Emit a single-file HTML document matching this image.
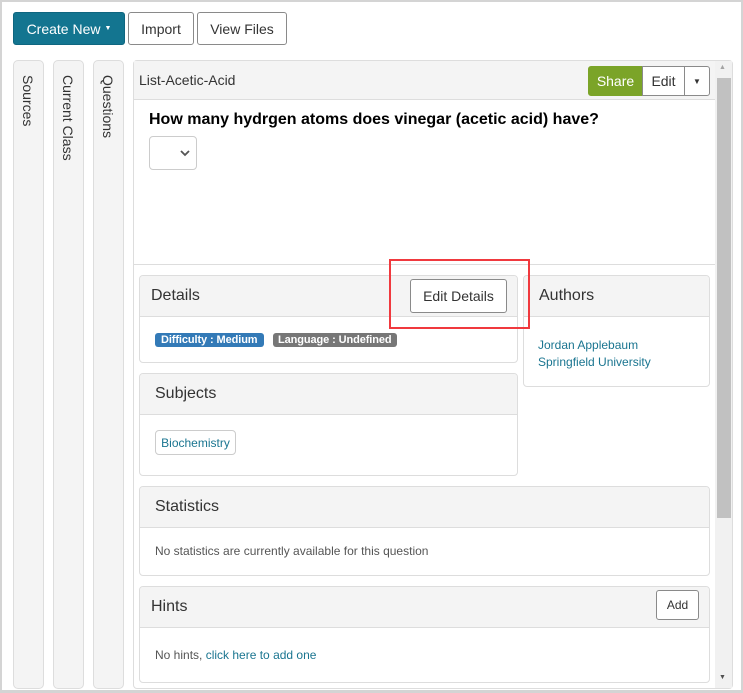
<!DOCTYPE html>
<html><head><style>
*{box-sizing:border-box;margin:0;padding:0}
body{width:743px;height:693px;overflow:hidden;background:#fff;font-family:"Liberation Sans",Arial,sans-serif;color:#333;position:relative}
.frame{position:absolute;left:0;top:0;width:743px;height:693px;border:2px solid #d4d4d4;border-bottom-width:3px}
.a{position:absolute}
.btn{position:absolute;border:1px solid #8a8a8a;border-radius:3px;background:#fff;font-size:14px;display:flex;align-items:center;justify-content:center;color:#333}
.tab{position:absolute;top:60px;width:31px;height:629px;background:#f4f4f4;border:1px solid #ddd;border-radius:5px}
.tab span{position:absolute;left:6px;top:14px;writing-mode:vertical-rl;font-size:14px;color:#333}
.panel{position:absolute;border:1px solid #ddd;border-radius:4px;background:#fff;overflow:hidden}
.ph{background:#f4f4f4;border-bottom:1px solid #ddd;font-size:16px;color:#333;padding-left:11px;display:flex;align-items:center;position:relative}
.badge{position:absolute;top:333px;height:14px;border-radius:3px;color:#fff;font-size:11px;font-weight:bold;line-height:14px;padding:0 6px;letter-spacing:-0.1px}
a{color:#1a7590;text-decoration:none}
</style></head><body>
<div class="frame"></div>
<div class="btn" style="left:13px;top:12px;width:112px;height:33px;background:#137590;border-color:#0f6680;color:#fff">Create New <span style="font-size:7px;margin-left:4px">▼</span></div>
<div class="btn" style="left:128px;top:12px;width:66px;height:33px">Import</div>
<div class="btn" style="left:197px;top:12px;width:90px;height:33px">View Files</div>

<div class="tab" style="left:13px"><span>Sources</span></div>
<div class="tab" style="left:53px"><span>Current Class</span></div>
<div class="tab" style="left:93px"><span>Questions</span></div>

<div class="a" style="left:133px;top:60px;width:600px;height:629px;border:1px solid #ddd;border-radius:4px;background:#fff"></div>
<div class="a" style="left:134px;top:61px;width:581px;height:39px;background:#f4f4f4;border-bottom:1px solid #ddd"></div>
<div class="a" style="left:139px;top:72px;font-size:14px;color:#333">List-Acetic-Acid</div>
<div class="btn" style="left:588px;top:66px;width:55px;height:30px;background:#7ba428;border-color:#7ba428;color:#fff;border-radius:3px 0 0 3px">Share</div>
<div class="btn" style="left:642px;top:66px;width:43px;height:30px;border-radius:0">Edit</div>
<div class="btn" style="left:684px;top:66px;width:26px;height:30px;border-radius:0 3px 3px 0;font-size:8px">▼</div>

<div class="a" style="left:715px;top:61px;width:17px;height:627px;background:#f1f1f1"></div>
<div class="a" style="left:717px;top:78px;width:14px;height:440px;background:#c1c1c1"></div>
<div class="a" style="left:719px;top:64px;font-size:7px;color:#a3a3a3">▲</div>
<div class="a" style="left:719px;top:674px;font-size:7px;color:#505050">▼</div>

<div class="a" style="left:149px;top:111px;font-size:16px;font-weight:bold;color:#000">How many hydrgen atoms does vinegar (acetic acid) have?</div>
<div class="a" style="left:149px;top:136px;width:48px;height:34px;border:1px solid #ccc;border-radius:4px"></div>
<svg class="a" style="left:180px;top:150px" width="10" height="7"><path d="M1 1 L5 5 L9 1" fill="none" stroke="#555" stroke-width="1.8"/></svg>
<div class="a" style="left:134px;top:264px;width:581px;height:1px;background:#ddd"></div>

<div class="panel" style="left:139px;top:275px;width:379px;height:88px"><div class="ph" style="height:41px">Details</div></div>
<div class="btn" style="left:410px;top:279px;width:97px;height:34px">Edit Details</div>
<span class="badge" style="left:155px;background:#337ab7">Difficulty : Medium</span>
<span class="badge" style="left:273px;background:#777;padding:0 5px">Language : Undefined</span>

<div class="panel" style="left:523px;top:275px;width:187px;height:112px"><div class="ph" style="height:41px;padding-left:15px">Authors</div>
<div style="padding:20px 0 0 14px;font-size:12px;line-height:17px"><a>Jordan Applebaum</a><br><a>Springfield University</a></div></div>

<div class="panel" style="left:139px;top:373px;width:379px;height:103px"><div class="ph" style="height:41px;padding-left:15px">Subjects</div></div>
<div class="a" style="left:155px;top:430px;width:81px;height:25px;border:1px solid #ccc;border-radius:4px;font-size:12px;color:#1a7590;display:flex;align-items:center;justify-content:center">Biochemistry</div>

<div class="panel" style="left:139px;top:486px;width:571px;height:90px"><div class="ph" style="height:41px;padding-left:15px">Statistics</div>
<div style="padding:16px 0 0 15px;font-size:12px;color:#555">No statistics are currently available for this question</div></div>

<div class="panel" style="left:139px;top:586px;width:571px;height:97px"><div class="ph" style="height:41px">Hints</div>
<div style="padding:20px 0 0 15px;font-size:12px;color:#555">No hints, <a>click here to add one</a></div></div>
<div class="btn" style="left:656px;top:590px;width:43px;height:30px;font-size:12px">Add</div>

<div class="a" style="left:389px;top:259px;width:141px;height:70px;border:2px solid #f0393e"></div>
</body></html>
